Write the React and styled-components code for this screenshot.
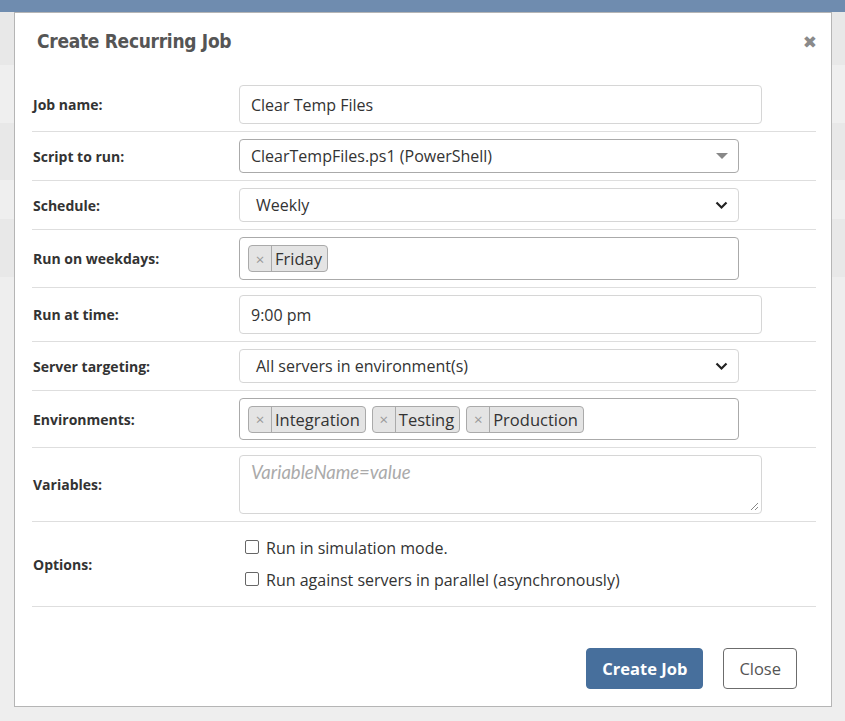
import React from 'react';
import styled, { createGlobalStyle } from 'styled-components';

const GlobalStyle = createGlobalStyle`
	html, body {
		margin: 0;
		padding: 0;
		background: #eeeeee;
	}
	body {
		font-family: 'Open Sans', 'Noto Sans', sans-serif;
		color: #333;
	}
`;

const stripes = [
	{ height: 53, shade: '#e8e8e8' },
	{ height: 58, shade: '#efefef' },
	{ height: 57, shade: '#e8e8e8' },
	{ height: 39, shade: '#efefef' },
	{ height: 58, shade: '#e8e8e8' }
];

const Page = styled.div`
	position: relative;
	width: 845px;
	height: 721px;
	overflow: hidden;
	background: #eeeeee;
`;

const TopBar = styled.div`
	height: 12px;
	background: #6f8caf;
`;

const Stripe = styled.div`
	height: ${p => p.h}px;
	background: ${p => p.shade};
`;

const Modal = styled.div`
	position: absolute;
	left: 14px;
	top: 12px;
	width: 816px;
	height: 693px;
	border: 1px solid #b5b5b5;
	background: #fff;
	display: flex;
	flex-direction: column;
`;

const Header = styled.div`
	height: 65px;
	box-sizing: border-box;
	display: flex;
	align-items: flex-start;
	justify-content: space-between;
	padding: 17px 14px 0 22px;
`;

const Title = styled.h4`
	margin: 0;
	font-family: 'Liberation Sans Narrow', 'DejaVu Sans Condensed', 'Open Sans', sans-serif;
	font-stretch: condensed;
	font-weight: bold;
	font-size: 19px;
	letter-spacing: -0.3px;
	color: #555;
`;

const CloseX = styled.span`
	font-family: 'DejaVu Sans', sans-serif;
	font-weight: bold;
	font-size: 17px;
	color: #8a8a8a;
	padding-top: 2px;
`;

const Form = styled.div`
	margin: 0 15px 0 17px;
`;

const Row = styled.div`
	display: grid;
	grid-template-columns: 207px 1fr;
	align-items: center;
	padding: 7px 0;
	border-bottom: 1px solid #dedede;
`;

const Label = styled.label`
	font-weight: bold;
	font-size: 14px;
	color: #333;
	padding-left: 1px;
`;

const TextInput = styled.div`
	width: 523px;
	height: 39px;
	box-sizing: border-box;
	border: 1px solid #d6d6d6;
	border-radius: 4px;
	display: flex;
	align-items: center;
	padding: 0 11px;
	font-size: 16px;
	color: #333;
`;

const SelectBox = styled.div`
	width: 500px;
	height: 34px;
	box-sizing: border-box;
	border: 1px solid ${p => (p.light ? '#d6d6d6' : '#aaa')};
	border-radius: 4px;
	display: flex;
	align-items: center;
	justify-content: space-between;
	padding: 0 10px 0 ${p => (p.light ? 16 : 11)}px;
	font-size: 16px;
	color: #333;
`;

const TagBox = styled.div`
	width: 500px;
	height: ${p => p.h}px;
	box-sizing: border-box;
	border: 1px solid #aaa;
	border-radius: 4px;
	display: flex;
	align-items: center;
	gap: 6px;
	padding: 0 8px;
`;

const Tag = styled.span`
	display: inline-flex;
	align-items: stretch;
	height: 27px;
	box-sizing: border-box;
	background: #e4e4e4;
	border: 1px solid #aaa;
	border-radius: 4px;
	font-size: 16.5px;
	color: #333;
`;

const TagRemove = styled.span`
	display: flex;
	align-items: center;
	justify-content: center;
	width: 22px;
	color: #999;
	font-size: 15px;
	border-right: 1px solid #aaa;
`;

const TagText = styled.span`
	display: flex;
	align-items: center;
	padding: 0 5px 0 3px;
`;

const TextArea = styled.div`
	position: relative;
	width: 523px;
	height: 59px;
	box-sizing: border-box;
	border: 1px solid #d6d6d6;
	border-radius: 4px;
	padding: 5px 11px 0;
	font-size: 18.5px;
	font-style: italic;
	color: #aaa;
	font-family: Lato, 'Open Sans', sans-serif;
`;

const Grip = styled.svg`
	position: absolute;
	right: 2px;
	bottom: 2px;
`;

const Checks = styled.div`
	display: flex;
	flex-direction: column;
	gap: 12px;
	padding: 9px 0 9px 6px;
`;

const Check = styled.label`
	display: flex;
	align-items: center;
	gap: 7px;
	font-size: 16px;
	color: #333;
	height: 20px;
`;

const Box = styled.span`
	width: 12px;
	height: 12px;
	border: 1px solid #666;
	border-radius: 2px;
	margin-top: -3px;
`;

const Footer = styled.div`
	flex: 1;
	display: flex;
	justify-content: flex-end;
	align-items: flex-end;
	gap: 20px;
	padding: 0 34px 17px 0;
`;

const Button = styled.button`
	height: 41px;
	padding: 0 15px;
	border-radius: 4px;
	font-family: 'Open Sans', sans-serif;
	font-size: 16.5px;
	font-weight: ${p => (p.primary ? 'bold' : 'normal')};
	background: ${p => (p.primary ? '#476f9c' : '#fff')};
	color: ${p => (p.primary ? '#fff' : '#555')};
	border: 1px solid ${p => (p.primary ? '#476f9c' : '#6c6c6c')};
`;

const Triangle = () => (
	<svg width="12" height="7" viewBox="0 0 12 7">
		<path d="M0 0 L12 0 L6 6 Z" fill="#888" />
	</svg>
);

const Chevron = () => (
	<svg width="13" height="9" viewBox="0 0 13 9">
		<path d="M1.5 1.5 L6.5 6.5 L11.5 1.5" fill="none" stroke="#222" strokeWidth="2.2" />
	</svg>
);

const Tags = ({ items, h }) => (
	<TagBox h={h}>
		{items.map(item => (
			<Tag key={item}>
				<TagRemove>×</TagRemove>
				<TagText>{item}</TagText>
			</Tag>
		))}
	</TagBox>
);

const App = () => (
	<Page>
		<GlobalStyle />
		<TopBar />
		{stripes.map((s, i) => (
			<Stripe key={i} h={s.height} shade={s.shade} />
		))}
		<Modal>
			<Header>
				<Title>Create Recurring Job</Title>
				<CloseX>✖</CloseX>
			</Header>
			<Form>
				<Row>
					<Label>Job name:</Label>
					<TextInput>Clear Temp Files</TextInput>
				</Row>
				<Row>
					<Label>Script to run:</Label>
					<SelectBox>
						<span>ClearTempFiles.ps1 (PowerShell)</span>
						<Triangle />
					</SelectBox>
				</Row>
				<Row>
					<Label>Schedule:</Label>
					<SelectBox light>
						<span>Weekly</span>
						<Chevron />
					</SelectBox>
				</Row>
				<Row>
					<Label>Run on weekdays:</Label>
					<Tags items={['Friday']} h={43} />
				</Row>
				<Row>
					<Label>Run at time:</Label>
					<TextInput>9:00 pm</TextInput>
				</Row>
				<Row>
					<Label>Server targeting:</Label>
					<SelectBox light>
						<span>All servers in environment(s)</span>
						<Chevron />
					</SelectBox>
				</Row>
				<Row>
					<Label>Environments:</Label>
					<Tags items={['Integration', 'Testing', 'Production']} h={42} />
				</Row>
				<Row>
					<Label>Variables:</Label>
					<TextArea>
						VariableName=value
						<Grip width="9" height="9" viewBox="0 0 9 9">
							<path d="M8 1 L1 8 M8 5 L5 8" stroke="#888" strokeWidth="1" />
						</Grip>
					</TextArea>
				</Row>
				<Row>
					<Label>Options:</Label>
					<Checks>
						<Check>
							<Box />
							Run in simulation mode.
						</Check>
						<Check>
							<Box />
							Run against servers in parallel (asynchronously)
						</Check>
					</Checks>
				</Row>
			</Form>
			<Footer>
				<Button primary>Create Job</Button>
				<Button>Close</Button>
			</Footer>
		</Modal>
	</Page>
);

export default App;
